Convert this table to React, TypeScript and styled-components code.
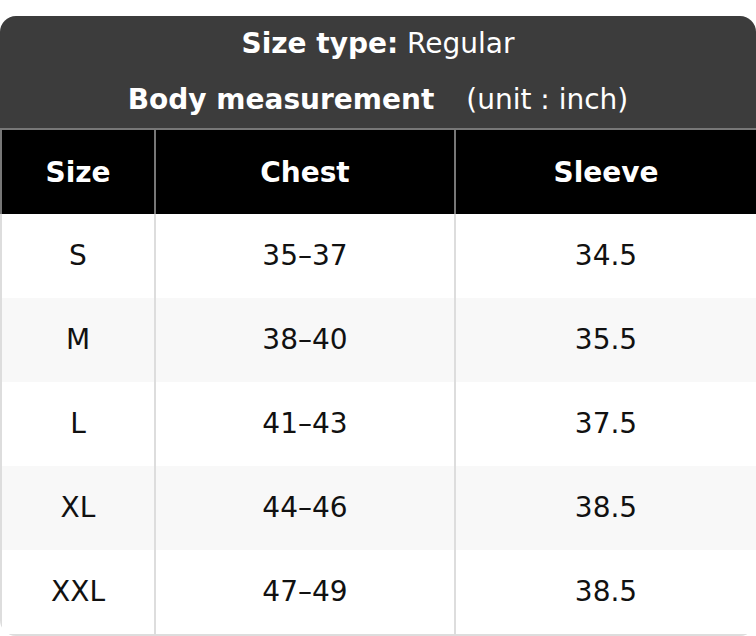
import React from 'react';
import styled, { createGlobalStyle } from 'styled-components';

const GlobalStyle = createGlobalStyle`
    html, body {
        margin: 0;
        padding: 0;
        background: #ffffff;
        font-family: "DejaVu Sans", "Liberation Sans", sans-serif;
    }
`;

const Page = styled.div`
    padding-top: 16px;
    width: 756px;
`;

const Card = styled.div`
    border-radius: 16px;
    overflow: hidden;
    background: #ffffff;
`;

const Caption = styled.div`
    background: #3c3c3c;
    color: #ffffff;
    font-size: 28px;
    text-align: center;
`;

const CaptionLine = styled.div`
    height: 56px;
    line-height: 56px;
`;

const Bold = styled.b`
    font-weight: 700;
`;

const Unit = styled.span`
    margin-left: 23px;
`;

const Table = styled.table`
    width: 756px;
    border-collapse: collapse;
    table-layout: fixed;
    font-size: 28px;
`;

const HeadCell = styled.th`
    height: 84px;
    padding: 0;
    background: #000000;
    color: #ffffff;
    font-weight: 700;
    text-align: center;
    border: 2px solid #777777;
    border-bottom: none;
`;

const Row = styled.tr<{ $shaded: boolean }>`
    background: ${({ $shaded }) => ($shaded ? '#f8f8f8' : '#ffffff')};
`;

const Cell = styled.td`
    height: 84px;
    padding: 0;
    line-height: 32px;
    color: #111111;
    text-align: center;
    border-left: 2px solid #dddddd;
    border-right: 2px solid #dddddd;
`;

const LastRow = styled(Row)`
    td {
        border-bottom: 2px solid #dddddd;
    }
`;

const sizes = [
    { size: 'S', chest: '35–37', sleeve: '34.5' },
    { size: 'M', chest: '38–40', sleeve: '35.5' },
    { size: 'L', chest: '41–43', sleeve: '37.5' },
    { size: 'XL', chest: '44–46', sleeve: '38.5' },
    { size: 'XXL', chest: '47–49', sleeve: '38.5' },
];

export default function App() {
    return (
        <Page>
            <GlobalStyle />
            <Card>
                <Caption>
                    <CaptionLine>
                        <Bold>Size type:</Bold> Regular
                    </CaptionLine>
                    <CaptionLine>
                        <Bold>Body measurement</Bold> <Unit>(unit : inch)</Unit>
                    </CaptionLine>
                </Caption>
                <Table>
                    <colgroup>
                        <col style={{ width: 154 }} />
                        <col style={{ width: 300 }} />
                        <col style={{ width: 302 }} />
                    </colgroup>
                    <thead>
                        <tr>
                            <HeadCell>Size</HeadCell>
                            <HeadCell>Chest</HeadCell>
                            <HeadCell>Sleeve</HeadCell>
                        </tr>
                    </thead>
                    <tbody>
                        {sizes.map((s, i) => {
                            const R = i === sizes.length - 1 ? LastRow : Row;
                            return (
                                <R key={s.size} $shaded={i % 2 === 1}>
                                    <Cell>{s.size}</Cell>
                                    <Cell>{s.chest}</Cell>
                                    <Cell>{s.sleeve}</Cell>
                                </R>
                            );
                        })}
                    </tbody>
                </Table>
            </Card>
        </Page>
    );
}
